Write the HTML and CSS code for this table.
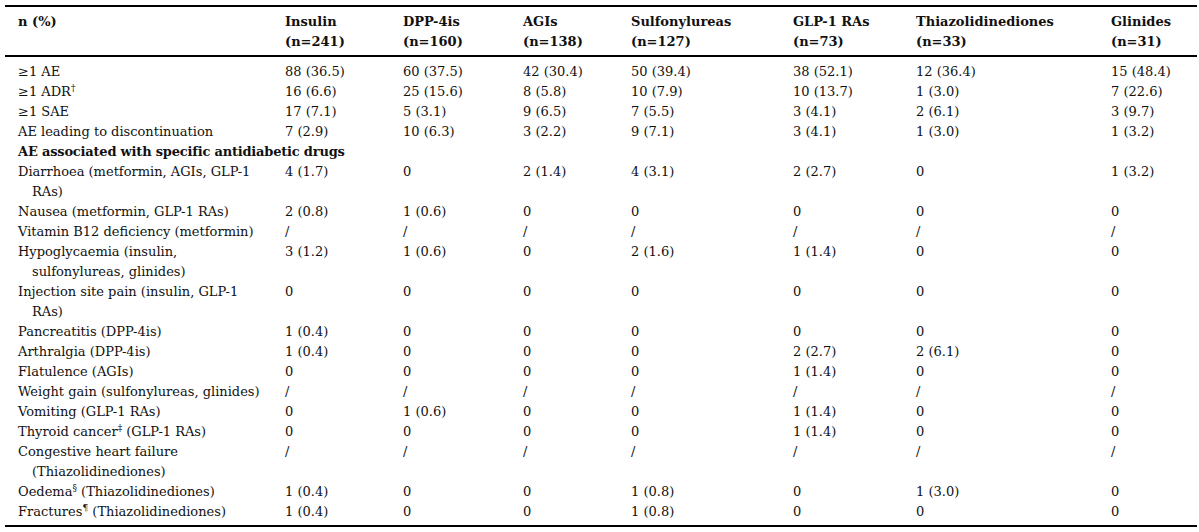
FILE: index.html
```html
<!DOCTYPE html>
<html>
<head>
<meta charset="utf-8">
<link rel="stylesheet" href="styles.css">
</head>
<body>
<table class="ae-table">
  <colgroup>
    <col class="c-label"><col class="c-ins"><col class="c-dpp"><col class="c-agi"><col class="c-sulf"><col class="c-glp"><col class="c-tzd"><col class="c-gli">
  </colgroup>
  <thead>
    <tr>
      <th class="label">n (%)</th>
      <th>Insulin<br>(n=241)</th>
      <th>DPP-4is<br>(n=160)</th>
      <th>AGIs<br>(n=138)</th>
      <th>Sulfonylureas<br>(n=127)</th>
      <th>GLP-1 RAs<br>(n=73)</th>
      <th>Thiazolidinediones<br>(n=33)</th>
      <th>Glinides<br>(n=31)</th>
    </tr>
  </thead>
  <tbody>
    <tr class="first"><td class="label">&ge;1 AE</td><td>88 (36.5)</td><td>60 (37.5)</td><td>42 (30.4)</td><td>50 (39.4)</td><td>38 (52.1)</td><td>12 (36.4)</td><td>15 (48.4)</td></tr>
    <tr><td class="label">&ge;1 ADR<sup>&dagger;</sup></td><td>16 (6.6)</td><td>25 (15.6)</td><td>8 (5.8)</td><td>10 (7.9)</td><td>10 (13.7)</td><td>1 (3.0)</td><td>7 (22.6)</td></tr>
    <tr><td class="label">&ge;1 SAE</td><td>17 (7.1)</td><td>5 (3.1)</td><td>9 (6.5)</td><td>7 (5.5)</td><td>3 (4.1)</td><td>2 (6.1)</td><td>3 (9.7)</td></tr>
    <tr><td class="label">AE leading to discontinuation</td><td>7 (2.9)</td><td>10 (6.3)</td><td>3 (2.2)</td><td>9 (7.1)</td><td>3 (4.1)</td><td>1 (3.0)</td><td>1 (3.2)</td></tr>
    <tr><td class="section" colspan="8">AE associated with specific antidiabetic drugs</td></tr>
    <tr><td class="label">Diarrhoea (metformin, AGIs, GLP-1 RAs)</td><td>4 (1.7)</td><td>0</td><td>2 (1.4)</td><td>4 (3.1)</td><td>2 (2.7)</td><td>0</td><td>1 (3.2)</td></tr>
    <tr><td class="label">Nausea (metformin, GLP-1 RAs)</td><td>2 (0.8)</td><td>1 (0.6)</td><td>0</td><td>0</td><td>0</td><td>0</td><td>0</td></tr>
    <tr><td class="label">Vitamin B12 deficiency (metformin)</td><td>/</td><td>/</td><td>/</td><td>/</td><td>/</td><td>/</td><td>/</td></tr>
    <tr><td class="label">Hypoglycaemia (insulin, sulfonylureas, glinides)</td><td>3 (1.2)</td><td>1 (0.6)</td><td>0</td><td>2 (1.6)</td><td>1 (1.4)</td><td>0</td><td>0</td></tr>
    <tr><td class="label">Injection site pain (insulin, GLP-1 RAs)</td><td>0</td><td>0</td><td>0</td><td>0</td><td>0</td><td>0</td><td>0</td></tr>
    <tr><td class="label">Pancreatitis (DPP-4is)</td><td>1 (0.4)</td><td>0</td><td>0</td><td>0</td><td>0</td><td>0</td><td>0</td></tr>
    <tr><td class="label">Arthralgia (DPP-4is)</td><td>1 (0.4)</td><td>0</td><td>0</td><td>0</td><td>2 (2.7)</td><td>2 (6.1)</td><td>0</td></tr>
    <tr><td class="label">Flatulence (AGIs)</td><td>0</td><td>0</td><td>0</td><td>0</td><td>1 (1.4)</td><td>0</td><td>0</td></tr>
    <tr><td class="label">Weight gain (sulfonylureas, glinides)</td><td>/</td><td>/</td><td>/</td><td>/</td><td>/</td><td>/</td><td>/</td></tr>
    <tr><td class="label">Vomiting (GLP-1 RAs)</td><td>0</td><td>1 (0.6)</td><td>0</td><td>0</td><td>1 (1.4)</td><td>0</td><td>0</td></tr>
    <tr><td class="label">Thyroid cancer<sup>&Dagger;</sup> (GLP-1 RAs)</td><td>0</td><td>0</td><td>0</td><td>0</td><td>1 (1.4)</td><td>0</td><td>0</td></tr>
    <tr><td class="label">Congestive heart failure (Thiazolidinediones)</td><td>/</td><td>/</td><td>/</td><td>/</td><td>/</td><td>/</td><td>/</td></tr>
    <tr><td class="label">Oedema<sup>&sect;</sup> (Thiazolidinediones)</td><td>1 (0.4)</td><td>0</td><td>0</td><td>1 (0.8)</td><td>0</td><td>1 (3.0)</td><td>0</td></tr>
    <tr class="last"><td class="label">Fractures<sup>&para;</sup> (Thiazolidinediones)</td><td>1 (0.4)</td><td>0</td><td>0</td><td>1 (0.8)</td><td>0</td><td>0</td><td>0</td></tr>
  </tbody>
</table>
</body>
</html>
```

FILE: styles.css
```css
html, body {
  margin: 0;
  padding: 0;
  background: #ffffff;
}

body {
  padding: 5px 2px 0 5px;
  font-family: "DejaVu Serif", "Liberation Serif", serif;
  font-size: 13px;
  line-height: 20px;
  color: #111111;
}

.ae-table {
  width: 1192px;
  border-collapse: collapse;
  table-layout: fixed;
}

.c-label { width: 280px; }
.c-ins { width: 118px; }
.c-dpp { width: 120px; }
.c-agi { width: 108px; }
.c-sulf { width: 162px; }
.c-glp { width: 123px; }
.c-tzd { width: 195px; }
.c-gli { width: 86px; }

.ae-table thead tr {
  border-top: 2px solid #000;
  border-bottom: 2px solid #000;
}

.ae-table th {
  font-weight: bold;
  text-align: left;
  vertical-align: top;
  padding: 5px 0 3px 0;
}

.ae-table td {
  padding: 0;
  vertical-align: top;
  text-align: left;
}

.ae-table th.label,
.ae-table td.label {
  padding-left: 27px;
  padding-right: 18px;
  text-indent: -14px;
}

.ae-table tr.first td {
  padding-top: 5px;
}

.ae-table tr.last td {
  padding-bottom: 3px;
}

.ae-table tbody tr.last {
  border-bottom: 2px solid #000;
}

.ae-table td.section {
  font-weight: bold;
  padding-left: 13px;
  white-space: nowrap;
  letter-spacing: -0.2px;
}

sup {
  font-size: 9px;
  line-height: 0;
  vertical-align: 5px;
}
```
